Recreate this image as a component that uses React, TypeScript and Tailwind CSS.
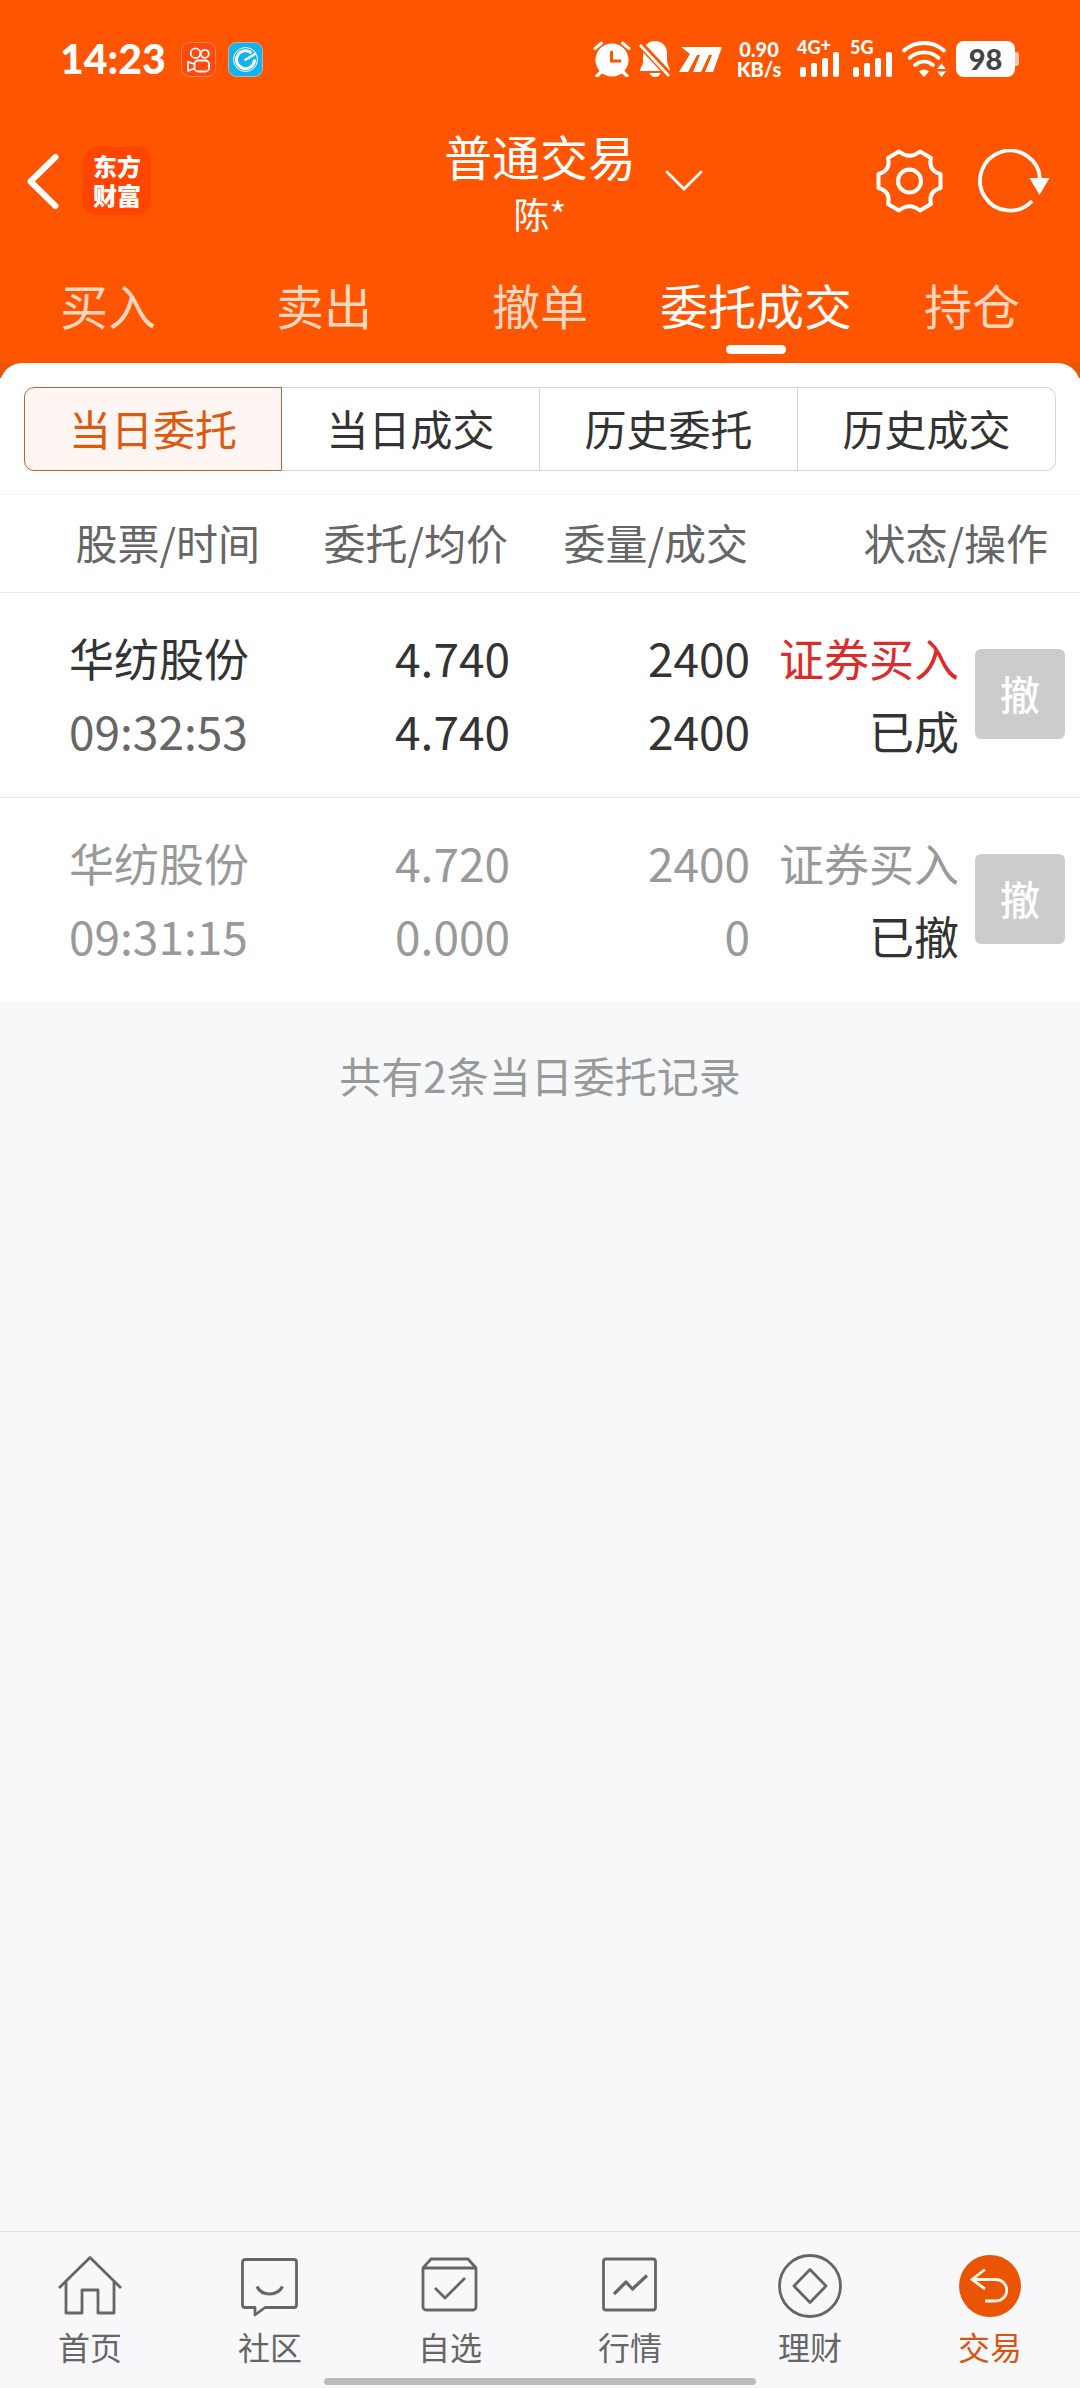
import { useState } from "react";
import type { ReactNode } from "react";

type Order = {
  name: string;
  time: string;
  price: string;
  avgPrice: string;
  quantity: string;
  filled: string;
  side: string;
  status: string;
  cancelled: boolean;
};

const tabs = ["买入", "卖出", "撤单", "委托成交", "持仓"];

const segments = ["当日委托", "当日成交", "历史委托", "历史成交"];

const orders: Order[] = [
  {
    name: "华纺股份",
    time: "09:32:53",
    price: "4.740",
    avgPrice: "4.740",
    quantity: "2400",
    filled: "2400",
    side: "证券买入",
    status: "已成",
    cancelled: false,
  },
  {
    name: "华纺股份",
    time: "09:31:15",
    price: "4.720",
    avgPrice: "0.000",
    quantity: "2400",
    filled: "0",
    side: "证券买入",
    status: "已撤",
    cancelled: true,
  },
];

function Signal({ children }: { children: ReactNode }) {
  return (
    <div className="flex w-[43px] flex-col">
      <span className="flex h-[11px] whitespace-nowrap text-[18px] font-black leading-[12px]">
        {children}
      </span>
      <svg viewBox="0 0 43 25" className="h-[25px] w-[43px]" fill="currentColor">
        <rect x="3" y="15" width="6" height="10" rx="2" />
        <rect x="14" y="11" width="6" height="14" rx="2" />
        <rect x="25" y="6" width="6" height="19" rx="2" />
        <rect x="36" y="0" width="6" height="25" rx="2" />
      </svg>
    </div>
  );
}

function StatusBar() {
  return (
    <div className="flex h-[118px] items-center justify-between pl-[60px] pr-[61px] font-['Lato','Noto_Sans_CJK_SC',sans-serif]">
      <div className="flex items-center">
        <span className="w-[121px] text-[41px] font-black leading-[48px]">14:23</span>
        <svg viewBox="0 0 35 35" className="size-[35px]" fill="none" stroke="currentColor">
          <rect x="0.5" y="0.5" width="34" height="34" rx="8" fill="#ff4a0f" strokeOpacity="0.3" />
          <g strokeWidth="1.8" strokeLinejoin="round">
            <circle cx="14.5" cy="11.2" r="4.8" />
            <circle cx="23.8" cy="11.8" r="4" />
            <rect x="13.5" y="18.5" width="14.5" height="11" rx="3.5" />
            <path d="M13.5 22 7 19.8v9l6.500-2.300" />
          </g>
        </svg>
        <svg viewBox="0 0 35 35" className="ml-[12px] size-[35px]" fill="none" stroke="currentColor">
          <rect x="0.5" y="0.5" width="34" height="34" rx="8" fill="#14b3ee" strokeOpacity="0.4" />
          <circle cx="17.500" cy="17.500" r="12" strokeWidth="1" />
          <path d="M23.500 11A9 9 0 1 0 26.500 17.500" strokeWidth="3" />
          <path d="M17.500 17.800 27 12" strokeWidth="2.500" strokeLinecap="round" />
        </svg>
      </div>

      <div className="flex items-center">
        <svg viewBox="0 0 38 36" className="h-[36px] w-[38px]" fill="none" stroke="currentColor">
          <circle cx="19" cy="19" r="16.500" fill="currentColor" stroke="none" />
          <path d="M2 7.500 8.500 2M36 7.500 29.500 2" strokeWidth="3" strokeLinecap="round" />
          <path d="M4 35l5-5M34 35l-5-5" strokeWidth="3.500" strokeLinecap="round" />
          <path d="M18.500 10v10h9.500" stroke="#ff5500" strokeWidth="3" />
        </svg>
        <svg viewBox="0 0 34 36" className="ml-[7px] h-[36px] w-[34px]" fill="currentColor">
          <path d="M17 0c7 0 12 5 12 12v7c0 4 3 8 3 11H2c0-3 3-5 3-10v-8C5 5 10 0 17 0z" />
          <path d="M11.500 32h11c-1 3-3 4-5.500 4s-4.500-1-5.500-4z" />
          <path d="M0 1 33 36" stroke="#ff5500" strokeWidth="7" />
          <path d="M2 4 31 35" stroke="currentColor" strokeWidth="2.600" />
        </svg>
        <svg viewBox="0 0 43 25" className="ml-[7px] h-[25px] w-[43px]" fill="currentColor">
          <path d="M2 0h41l-9 25h-8l7-17h-3l-8 17h-8l7-17h-3L9 25H0L11 7z" />
        </svg>
        <p className="ml-[12px] w-[50px] whitespace-nowrap text-center text-[20px] font-black leading-[20px]">
          0.90
          <br />
          KB/s
        </p>
        <div className="ml-[13px] flex gap-[10px]">
          <Signal>
            4G<span className="leading-[8px]">+</span>
          </Signal>
          <Signal>5G</Signal>
        </div>
        <svg viewBox="0 0 46 36" className="ml-[9px] h-[36px] w-[46px]" fill="none" stroke="currentColor">
          <path d="M2 9.500C13-.5 31-.5 42 9.500" strokeWidth="3.800" strokeLinecap="round" />
          <path d="M7.500 17c8-7.500 21-7.500 29 0" strokeWidth="3.800" strokeLinecap="round" />
          <path d="M13 24c5.500-4.500 12.500-4.500 18 0" strokeWidth="3.800" strokeLinecap="round" />
          <path d="M17 30.500q5-4 10 0L22 36z" fill="currentColor" stroke="none" />
          <path d="M39.500 22.500 44 28h-9zM39.500 36l4.500-5.500h-9z" fill="currentColor" stroke="none" />
        </svg>
        <div className="ml-[8px] flex items-center">
          <span className="flex h-[36px] w-[59px] items-center justify-center rounded-[8px] bg-white text-[29px] font-black text-[#444]">
            98
          </span>
          <span className="h-[14px] w-[4px] rounded-r-[3px] bg-[#ffc4a5]" />
        </div>
      </div>
    </div>
  );
}

function TitleBar() {
  return (
    <div className="grid h-[126px] grid-cols-[1fr_auto_1fr] items-center">
      <div className="flex items-center pl-[26px]">
        <button type="button" aria-label="返回" className="mr-[24px]">
          <svg viewBox="0 0 33 57" className="h-[57px] w-[33px]" fill="none" stroke="currentColor">
            <path d="M29.500 4 4.500 28.500 29.500 53" strokeWidth="6" strokeLinecap="round" strokeLinejoin="round" />
          </svg>
        </button>
        <a
          href="#home"
          className="flex size-[68px] items-center justify-center rounded-[14px] bg-[#ff4500] pb-[2px] text-[24px] font-black leading-[29px]"
        >
          <span>
            东方
            <br />
            财富
          </span>
        </a>
      </div>

      <div className="text-center">
        <h1 className="text-[48px] leading-[64px]">普通交易</h1>
        <p className="text-[36px] leading-[52px]">陈*</p>
      </div>

      <div className="flex items-center justify-between pl-[29px] pr-[30px]">
        <button type="button" aria-label="切换账户">
          <svg viewBox="0 0 38 22" className="h-[22px] w-[38px]" fill="none" stroke="currentColor">
            <path d="M2 2l17 17L36 2" strokeWidth="2.800" strokeLinecap="round" />
          </svg>
        </button>
        <div className="flex items-center gap-[34px]">
          <button type="button" aria-label="设置">
            <svg viewBox="0 0 67 64" className="h-[64px] w-[67px]" fill="none" stroke="currentColor">
              <path
                d="M23 2.500q10.500 8.500 21 0L55 9q-3 12.500 9.500 16v14Q52 42.500 55 55l-11 6.500q-10.500-8.500-21 0L12 55q3-12.500-9.500-16V25Q15 21.500 12 9z"
                strokeWidth="4"
                strokeLinejoin="round"
              />
              <circle cx="33.500" cy="32" r="11.500" strokeWidth="4" />
            </svg>
          </button>
          <button type="button" aria-label="刷新">
            <svg viewBox="0 0 73 64" className="h-[64px] w-[73px]" fill="none" stroke="currentColor">
              <path d="M55 52A30 30 0 1 1 63 30" strokeWidth="3.800" />
              <path d="M52.500 29h20L62.500 46z" fill="currentColor" stroke="none" />
            </svg>
          </button>
        </div>
      </div>
    </div>
  );
}

function OrderRow({ order }: { order: Order }) {
  const main = order.cancelled ? "text-[#999]" : "text-[#333]";
  const time = order.cancelled ? "text-[#999]" : "text-[#666]";
  const side = order.cancelled ? "text-[#999]" : "text-[#dc2b2b]";

  return (
    <tr className="border-b border-[#ebebeb] leading-[73px] last:border-0">
      <td className="pb-[30px] pl-[69px] pt-[28px]">
        <div className={`text-[45px] ${main}`}>{order.name}</div>
        <div className={`text-[46px] ${time}`}>{order.time}</div>
      </td>
      <td className={`pb-[30px] pt-[28px] text-right text-[46px] ${main}`}>
        <div>{order.price}</div>
        <div>{order.avgPrice}</div>
      </td>
      <td className={`pb-[30px] pt-[28px] text-right text-[46px] ${main}`}>
        <div>{order.quantity}</div>
        <div>{order.filled}</div>
      </td>
      <td className="pb-[30px] pr-[15px] pt-[28px]">
        <div className="flex items-center justify-end gap-[16px]">
          <div className="text-right text-[45px]">
            <div className={side}>{order.side}</div>
            <div className="text-[#333]">{order.status}</div>
          </div>
          <button
            type="button"
            disabled
            className="size-[90px] rounded-[6px] bg-[#ccc] text-[40px] font-medium text-white"
          >
            撤
          </button>
        </div>
      </td>
    </tr>
  );
}

function NavItem({
  label,
  active = false,
  children,
}: {
  label: string;
  active?: boolean;
  children: ReactNode;
}) {
  return (
    <a
      href="#nav"
      aria-current={active ? "page" : undefined}
      className={`flex flex-col items-center gap-[6px] pt-[22px] ${
        active ? "text-[#d9540f]" : "text-[#666]"
      }`}
    >
      <svg
        viewBox="0 0 64 64"
        className="size-[64px]"
        fill="none"
        stroke="currentColor"
        strokeWidth="2.8"
        strokeLinejoin="round"
      >
        {children}
      </svg>
      <span className="text-[32px] leading-[44px]">{label}</span>
    </a>
  );
}

function BottomNav() {
  return (
    <nav className="border-t border-[#e2e2e4] bg-[#f8f8fa] pb-[3px]">
      <div className="grid grid-cols-6">
        <NavItem label="首页">
          <path d="M1 34 32 3.500 63 34" />
          <path d="M8 28v31h16V36h16v23h16V28" />
        </NavItem>
        <NavItem label="社区">
          <path d="M7 5.500h49a2.500 2.500 0 0 1 2.500 2.500v43a2.500 2.500 0 0 1-2.500 2.500H27l-10 7.500v-7.500H7A2.500 2.500 0 0 1 4.500 51V8A2.500 2.500 0 0 1 7 5.500z" />
          <path d="M19 32.500c5 10 20 10 25.500 0" strokeWidth="3.200" />
        </NavItem>
        <NavItem label="自选">
          <path d="M5 14l8-9h37l8 9v39a3 3 0 0 1-3 3H8a3 3 0 0 1-3-3zM5 14h53" />
          <path d="M17 34l10 10 20-20" />
        </NavItem>
        <NavItem label="行情">
          <rect x="5.500" y="5" width="52" height="51" rx="2.500" />
          <path d="M16 40l12-12 6.500 7L49 21.500" strokeWidth="3.200" />
        </NavItem>
        <NavItem label="理财">
          <circle cx="32" cy="32" r="30.500" />
          <path d="M32 15.500 48 32 32 48.500 16 32z" />
        </NavItem>
        <NavItem label="交易" active>
          <circle cx="32" cy="32" r="31" fill="#e95504" stroke="none" />
          <path
            d="M27 15.500 14 25.500 27 35M14 25.500h24a10.700 10.700 0 0 1 0 21.500H27"
            stroke="#fff3e6"
            strokeLinejoin="miter"
          />
        </NavItem>
      </div>
      <div className="mx-auto mt-[10px] h-[7px] w-2/5 rounded-full bg-[#bbb]" />
    </nav>
  );
}

export default function App() {
  const [activeTab, setActiveTab] = useState("委托成交");
  const [activeSegment, setActiveSegment] = useState("当日委托");

  return (
    <div className="flex min-h-screen flex-col bg-[#f7f8fa] font-['Noto_Sans_CJK_SC',sans-serif]">
      <header className="bg-[#ff5500] text-white">
        <StatusBar />
        <TitleBar />
        <div role="tablist" className="grid grid-cols-5 pb-[9px] pt-[25px]">
          {tabs.map((tab) => {
            const isActive = tab === activeTab;

            return (
              <button
                key={tab}
                type="button"
                role="tab"
                aria-selected={isActive}
                onClick={() => setActiveTab(tab)}
                className={`flex flex-col items-center gap-[6px] text-[48px] leading-[70px] ${
                  isActive ? "text-white" : "text-[#ffd6bf]"
                }`}
              >
                {tab}
                <span
                  className={`h-[9px] w-[60px] rounded-full ${isActive ? "bg-white" : ""}`}
                />
              </button>
            );
          })}
        </div>
      </header>

      <main className="flex-1">
        <div className="bg-linear-to-b from-[#e85506] from-[15px] to-white to-[15px]">
          <div className="rounded-t-[22px] border-b border-[#f5f5f5] bg-white px-[24px] pb-[23px] pt-[24px]">
            <div className="grid grid-cols-4">
              {segments.map((segment) => {
                const isActive = segment === activeSegment;

                return (
                  <button
                    key={segment}
                    type="button"
                    aria-pressed={isActive}
                    onClick={() => setActiveSegment(segment)}
                    className={`h-[84px] border pb-[3px] text-[42px] first:rounded-l-[10px] last:rounded-r-[10px] ${
                      isActive
                        ? "border-[#b5673a] bg-[#fff6f3] text-[#dc5a10]"
                        : "border-l-0 border-[#d6d6d6] text-[#333]"
                    }`}
                  >
                    {segment}
                  </button>
                );
              })}
            </div>
          </div>
        </div>

        <table className="w-full table-fixed border-collapse bg-white">
          <thead>
            <tr className="h-[97px] border-b border-[#ebebeb] text-right text-[42px] leading-[60px] text-[#666]">
              <th className="pb-[2px] pr-[10px] font-normal">股票/时间</th>
              <th className="w-[240px] pb-[2px] pr-[2px] font-normal">委托/均价</th>
              <th className="w-[240px] pb-[2px] pr-[2px] font-normal">委量/成交</th>
              <th className="w-[330px] pb-[2px] pr-[32px] font-normal">状态/操作</th>
            </tr>
          </thead>
          <tbody>
            {orders.map((order) => (
              <OrderRow key={order.time} order={order} />
            ))}
          </tbody>
        </table>

        <p className="pt-[43px] text-center text-[42px] leading-[60px] text-[#999]">
          共有{orders.length}条当日委托记录
        </p>
      </main>

      <BottomNav />
    </div>
  );
}
